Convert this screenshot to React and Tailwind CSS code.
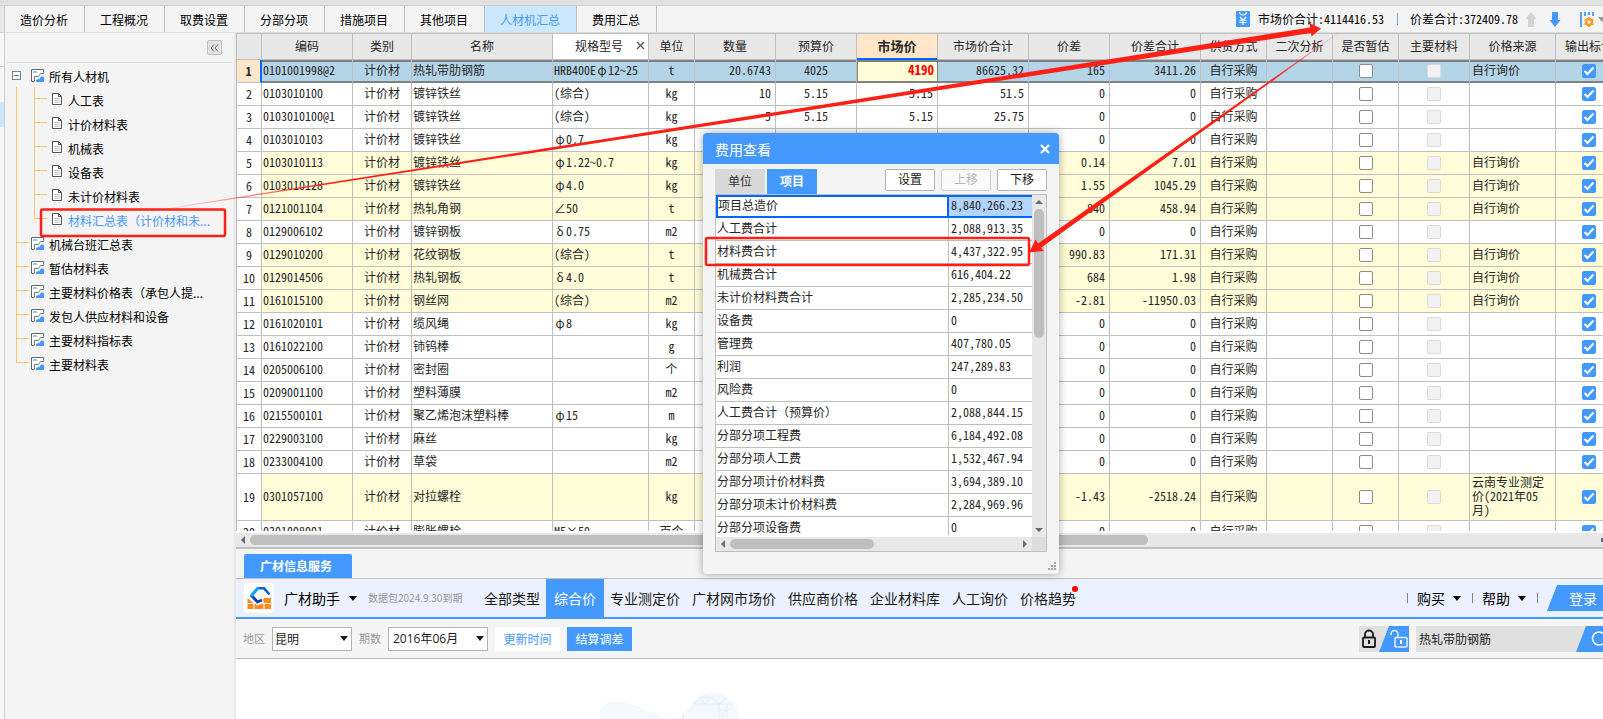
import React, { useState } from 'react';
import clsx from 'clsx';

const tabs = ['造价分析', '工程概况', '取费设置', '分部分项', '措施项目', '其他项目', '人材机汇总', '费用汇总'];

const childNodes = ['人工表', '计价材料表', '机械表', '设备表', '未计价材料表', '材料汇总表（计价材和未...'];
const rootNodes = ['机械台班汇总表', '暂估材料表', '主要材料价格表（承包人提...', '发包人供应材料和设备', '主要材料指标表', '主要材料表'];

const columns = [
    { title: '', width: 'w-[25px]' },
    { title: '编码', width: 'w-[91px]' },
    { title: '类别', width: 'w-[59px]' },
    { title: '名称', width: 'w-[141px]' },
    { title: '规格型号', width: 'w-[96px]' },
    { title: '单位', width: 'w-[46px]' },
    { title: '数量', width: 'w-[81px]' },
    { title: '预算价', width: 'w-[81px]' },
    { title: '市场价', width: 'w-[81px]' },
    { title: '市场价合计', width: 'w-[91px]' },
    { title: '价差', width: 'w-[81px]' },
    { title: '价差合计', width: 'w-[91px]' },
    { title: '供货方式', width: 'w-[66px]' },
    { title: '二次分析', width: 'w-[66px]' },
    { title: '是否暂估', width: 'w-[66px]' },
    { title: '主要材料', width: 'w-[71px]' },
    { title: '价格来源', width: 'w-[86px]' },
    { title: '输出标记', width: 'w-[67px]' },
];

// code, name, spec, unit, qty, budget, market, market total, diff, diff total, source
const materials = [
    ['0101001998@2', '热轧带肋钢筋', 'HRB400Eφ12~25', 't', '20.6743', '4025', '4190', '86625.32', '165', '3411.26', '自行询价'],
    ['0103010100', '镀锌铁丝', '(综合)', 'kg', '10', '5.15', '5.15', '51.5', '0', '0', ''],
    ['0103010100@1', '镀锌铁丝', '(综合)', 'kg', '5', '5.15', '5.15', '25.75', '0', '0', ''],
    ['0103010103', '镀锌铁丝', 'φ0.7', 'kg', '', '', '', '', '0', '0', ''],
    ['0103010113', '镀锌铁丝', 'φ1.22~0.7', 'kg', '', '', '', '', '0.14', '7.01', '自行询价'],
    ['0103010128', '镀锌铁丝', 'φ4.0', 'kg', '', '', '', '', '1.55', '1045.29', '自行询价'],
    ['0121001104', '热轧角钢', '∠50', 't', '', '', '', '', '840', '458.94', '自行询价'],
    ['0129006102', '镀锌钢板', 'δ0.75', 'm2', '', '', '', '', '0', '0', ''],
    ['0129010200', '花纹钢板', '(综合)', 't', '', '', '', '', '990.83', '171.31', '自行询价'],
    ['0129014506', '热轧钢板', 'δ4.0', 't', '', '', '', '', '684', '1.98', '自行询价'],
    ['0161015100', '钢丝网', '(综合)', 'm2', '', '', '', '', '-2.81', '-11950.03', '自行询价'],
    ['0161020101', '缆风绳', 'φ8', 'kg', '', '', '', '', '0', '0', ''],
    ['0161022100', '铈钨棒', '', 'g', '', '', '', '', '0', '0', ''],
    ['0205006100', '密封圈', '', '个', '', '', '', '', '0', '0', ''],
    ['0209001100', '塑料薄膜', '', 'm2', '', '', '', '', '0', '0', ''],
    ['0215500101', '聚乙烯泡沫塑料棒', 'φ15', 'm', '', '', '', '', '0', '0', ''],
    ['0229003100', '麻丝', '', 'kg', '', '', '', '', '0', '0', ''],
    ['0233004100', '草袋', '', 'm2', '', '', '', '', '0', '0', ''],
    ['0301057100', '对拉螺栓', '', 'kg', '', '', '', '', '-1.43', '-2518.24', '云南专业测定价(2021年05月)'],
    ['0301098001', '膨胀螺栓', 'M5×50', '百个', '', '', '', '', '0', '0', ''],
];

const fees = [
    ['项目总造价', '8,840,266.23'],
    ['人工费合计', '2,088,913.35'],
    ['材料费合计', '4,437,322.95'],
    ['机械费合计', '616,404.22'],
    ['未计价材料费合计', '2,285,234.50'],
    ['设备费', '0'],
    ['管理费', '407,780.05'],
    ['利润', '247,289.83'],
    ['风险费', '0'],
    ['人工费合计（预算价）', '2,088,844.15'],
    ['分部分项工程费', '6,184,492.08'],
    ['分部分项人工费', '1,532,467.94'],
    ['分部分项计价材料费', '3,694,389.10'],
    ['分部分项未计价材料费', '2,284,969.96'],
    ['分部分项设备费', '0'],
];

const priceTabs = ['全部类型', '综合价', '专业测定价', '广材网市场价', '供应商价格', '企业材料库', '人工询价', '价格趋势'];

const Caret = ({ className }) => (
    <svg viewBox="0 0 8 5" className={clsx('h-[5px] w-2 shrink-0', className)}><path d="M0 0h8L4 5z" fill="currentColor" /></svg>
);

const SheetIcon = () => (
    <svg viewBox="0 0 13 13" className="h-[13px] w-[13px] shrink-0">
        <path d="M12.500 3.500V.5H.5v12h3" fill="#fff" stroke="#666" />
        <rect x="2" y="2" width="4" height="2" fill="#9cc9f5" />
        <path d="M3.500 12V7.500h4l2-3h3.500" fill="none" stroke="#777" />
        <path d="M5 13v-2l4-1.500L10 7.500h3V13z" fill="#4499ff" />
    </svg>
);

const FileIcon = () => (
    <svg viewBox="0 0 10 12" className="h-3 w-[10px] shrink-0">
        <path d="M.5.5h6l3 3v8h-9z" fill="#fff" stroke="#555" />
        <path d="M6.500.5v3h3" fill="none" stroke="#555" />
        <path d="M2 5.500h6M2 7.500h6M2 9.500h6" stroke="#bbb" strokeWidth="0.8" />
    </svg>
);

const Branch = ({ last }) => (
    <span className="flex w-[13px] shrink-0 flex-col self-stretch">
        <span className="h-3 border-b border-l border-[#ffc36b]"></span>
        <span className={clsx('h-3 border-[#ffc36b]', !last && 'border-l')}></span>
    </span>
);

// Greek symbols take a full character cell in the spec column
const Spec = ({ text }) => text.split(/([φδ])/).map((part, i) => (
    /[φδ]/.test(part) ? <span key={i} className="inline-block w-3 text-center">{part}</span> : part
));

const Check = ({ label, checked, disabled }) => {
    const [on, setOn] = useState(!!checked);
    return (
        <span className="grid place-items-center">
            <input type="checkbox" aria-label={label} checked={on} disabled={disabled} onChange={() => setOn(!on)}
                className="col-start-1 row-start-1 h-[14px] w-[14px] appearance-none rounded-[2px] border border-[#8c8c8c] bg-white checked:border-[#4499ff] checked:bg-[#4499ff] disabled:border-[#d9d9d9] disabled:bg-[#f2f2f2]" />
            {on && (
                <svg viewBox="0 0 14 14" className="pointer-events-none col-start-1 row-start-1 h-[14px] w-[14px]">
                    <path d="M2.500 7l3 3 6-6.500" fill="none" stroke="#fff" strokeWidth="2" />
                </svg>
            )}
        </span>
    );
};

const Sidebar = () => (
    <aside className="w-[231px] shrink-0 border-r-2 border-[#e8e8e8] text-black">
        <div className="mx-0.5 flex h-[30px] items-center justify-end border-b border-[#dcdcdc] pr-[10px]">
            <button aria-label="收起" className="flex h-[15px] w-[15px] items-center justify-center rounded-[2px] border border-[#bfbfbf] bg-[#e4e4e4]">
                <svg viewBox="0 0 9 8" className="h-2 w-[9px]"><path d="M4 .5L1 4l3 3.500M8 .5L5 4l3 3.500" fill="none" stroke="#666" /></svg>
            </button>
        </div>
        <ul className="text-xs">
            <li className="flex h-6 items-center pl-[7px]">
                <svg viewBox="0 0 9 9" className="mr-[10px] h-[9px] w-[9px]">
                    <rect x=".5" y=".5" width="8" height="8" fill="#fff" stroke="#808080" /><path d="M2 4.500h5" stroke="#1a8fff" />
                </svg>
                <SheetIcon />
                <span className="pt-[3px] pl-[5px]">所有人材机</span>
            </li>
            {childNodes.map((name, i) => (
                <li key={name} className="flex h-6 items-center pl-[11px]">
                    <span className="w-[18px] self-stretch border-l border-[#ffc36b]"></span>
                    <Branch last={i === childNodes.length - 1} />
                    <span className="pr-[6px] pl-[5px]"><FileIcon /></span>
                    <a href="#" className={clsx('pt-[3px] whitespace-nowrap', i === 5 && 'text-[#4499ff]')}>{name}</a>
                </li>
            ))}
            {rootNodes.map((name, i) => (
                <li key={name} className="flex h-6 items-center pl-[11px]">
                    <Branch last={i === rootNodes.length - 1} />
                    <span className="pr-[5px] pl-0.5"><SheetIcon /></span>
                    <a href="#" className="pt-[3px] whitespace-nowrap">{name}</a>
                </li>
            ))}
        </ul>
    </aside>
);

const MaterialTable = () => (
    <table className="w-[1386px] table-fixed border-separate border-spacing-0 font-['Noto_Sans_Mono_CJK_SC','Liberation_Mono',monospace] text-xs leading-[14px] text-[#262626]">
        <thead>
            <tr className="h-[26px] bg-[#e8e8e8]">
                {columns.map(({ title, width }, i) => (
                    <th key={i} className={clsx(width, 'h-[26px] border-r border-b p-0 pb-0.5',
                        title === '规格型号' && 'bg-white',
                        title === '市场价'
                            ? 'border-r-[#bfbfbf] border-b-[#0066ff] bg-[#ffe6c8] text-[13px] font-bold shadow-[inset_0_-1px_0_#0066ff]'
                            : 'border-[#bfbfbf] font-normal')}>
                        {title === '规格型号' ? (
                            <span className="flex items-center justify-end gap-[13px] pr-[3px]">
                                {title}
                                <svg viewBox="0 0 9 9" className="h-[9px] w-[9px]"><path d="M1 1l7 7M8 1L1 8" stroke="#555" strokeWidth="1.3" /></svg>
                            </span>
                        ) : title}
                    </th>
                ))}
            </tr>
        </thead>
        <tbody>
            {materials.map(([code, name, spec, unit, qty, budget, market, total, diff, diffTotal, source], i) => {
                const first = i === 0;
                const tall = source.length > 4;
                const base = clsx('border-r border-b',
                    first ? 'border-r-[#bfbfbf] border-b-[#808080] bg-[#b4d4e7] shadow-[inset_0_2px_0_#808080,inset_0_-1px_0_#808080]' : 'border-[#bfbfbf]',
                    !first && source && 'bg-[#fffcd7]');
                const left = clsx(base, 'p-0 pb-0.5 pl-px whitespace-nowrap');
                const center = clsx(base, 'p-0 pb-0.5 text-center');
                const right = clsx(base, 'p-0 pr-1 pb-0.5 text-right');
                const box = clsx(base, 'p-0');
                return (
                    <tr key={code} className={tall ? 'h-[47px]' : 'h-[23px]'}>
                        <td className={clsx('border-b border-b-[#bfbfbf] p-0 text-center', first ? 'border-r-2 border-r-[#0066ff] bg-[#ffe6c8] font-bold' : 'border-r border-r-[#bfbfbf]')}>{i + 1}</td>
                        <td className={left}>{code}</td>
                        <td className={center}>计价材</td>
                        <td className={left}>{name}</td>
                        <td className={left}><Spec text={spec} /></td>
                        <td className={center}>{unit}</td>
                        <td className={right}>{qty}</td>
                        <td className={center}>{budget}</td>
                        {first
                            ? <td className="border-r border-b border-[#808080] bg-[#fffcd7] p-0 pr-[3px] pb-0.5 text-right text-[13px] font-bold text-[#f00] shadow-[inset_0_2px_0_#808080,inset_1px_-1px_0_#808080]">{market}</td>
                            : <td className={right}>{market}</td>}
                        <td className={right}>{total}</td>
                        <td className={right}>{diff}</td>
                        <td className={right}>{diffTotal}</td>
                        <td className={center}>自行采购</td>
                        <td className={box}></td>
                        <td className={box}><Check label="是否暂估" /></td>
                        <td className={box}><Check label="主要材料" disabled /></td>
                        <td className={clsx(base, 'p-0 pr-2 pb-0.5 pl-0.5')}>{source}</td>
                        <td className={box}><Check label="输出标记" checked /></td>
                    </tr>
                );
            })}
        </tbody>
    </table>
);

const PriceService = () => (
    <section className="shrink-0">
        <div className="flex h-[30px] items-end border-b border-[#bfbfbf] bg-[#f4f4f4] pl-2">
            <button className="h-6 w-[108px] rounded-t-[2px] bg-[#4499ff] pr-1 text-xs font-bold text-white">广材信息服务</button>
        </div>
        <div className="flex h-10 items-center border-b-2 border-[#4499ff] bg-[#ebf1ff] text-sm whitespace-nowrap text-[#1a1a1a]">
            <svg viewBox="0 0 30 30" className="ml-2 h-[30px] w-[30px]">
                <rect width="30" height="30" rx="3" fill="#fff" />
                <path d="M3.500 15v5h6zM27 15v5H17l3-5zM3.500 21h6v5h-6zM10.500 21h9v5h-9zM20.500 21H27v5h-6.500z" fill="#ff8a1f" />
                <path d="M7 12l6.500 7.500L19 17" fill="none" stroke="#fff" strokeWidth="5" />
                <path d="M13 5.200h7L25.500 11.500" fill="none" stroke="#0b5fd0" strokeWidth="2.600" />
                <path d="M7 12l6.500 7 4.500-2" fill="none" stroke="#0b45b4" strokeWidth="3" />
                <path d="M14.500 4.500L7 13" fill="none" stroke="#0aa5f5" strokeWidth="3.200" />
            </svg>
            <button className="ml-[10px] flex items-center gap-[9px] text-black">广材助手 <Caret /></button>
            <span className="ml-[11px] w-[110px] text-[10px] text-[#999]">数据包2024.9.30到期</span>
            <nav className="flex h-full items-center">
                {priceTabs.map((name) => (
                    <a key={name} href="#" className={clsx('relative flex h-full items-center',
                        name === '综合价' ? 'bg-[#4499ff] px-2 text-white' : 'px-[6px]')}>
                        {name}
                        {name === '价格趋势' && <i className="absolute top-[7px] right-1 h-[6px] w-[6px] rounded-full bg-[#f00]"></i>}
                    </a>
                ))}
            </nav>
            <div className="ml-auto flex items-center text-black">
                <span className="h-[10px] w-px bg-[#888]"></span>
                <button className="flex items-center gap-2 pr-[11px] pl-[9px]">购买 <Caret /></button>
                <span className="h-[10px] w-px bg-[#888]"></span>
                <button className="flex items-center gap-2 pr-[11px] pl-[9px]">帮助 <Caret /></button>
                <span className="h-[10px] w-px bg-[#888]"></span>
                <button className="ml-[9px] h-[26px] w-[56px] bg-[#4499ff] pl-[22px] text-left text-white [clip-path:polygon(10px_0,100%_0,100%_100%,0_100%)]">登录</button>
            </div>
        </div>
        <div className="flex h-10 items-center border-b border-[#bfbfbf] bg-[#f5f5f5] pl-[7px] text-xs text-[#1a1a1a]">
            <label htmlFor="area" className="w-[29px] text-[11px] text-[#999]">地区</label>
            <span className="grid items-center">
                <select id="area" className="col-start-1 row-start-1 h-6 w-20 appearance-none border border-[#b3b3b3] bg-white pl-[2px]"><option>昆明</option></select>
                <Caret className="pointer-events-none col-start-1 row-start-1 mr-1 justify-self-end" />
            </span>
            <label htmlFor="period" className="ml-[7px] w-[29px] text-[11px] text-[#999]">期数</label>
            <span className="grid items-center">
                <select id="period" className="col-start-1 row-start-1 h-6 w-[100px] appearance-none border border-[#b3b3b3] bg-white pl-1 font-['Open_Sans','Noto_Sans_CJK_SC',sans-serif]"><option>2016年06月</option></select>
                <Caret className="pointer-events-none col-start-1 row-start-1 mr-1 justify-self-end" />
            </span>
            <button className="ml-[7px] h-6 w-[65px] bg-white text-[#4499ff]">更新时间</button>
            <button className="ml-[7px] h-6 w-[65px] bg-[#4499ff] text-white">结算调差</button>
            <button aria-label="锁定" className="ml-auto h-[26px] w-[50px] bg-[#e0e0e0]">
                <svg viewBox="0 0 50 26" className="h-[26px] w-[50px]">
                    <path d="M30 0h20v26H20z" fill="#4499ff" />
                    <rect x="4" y="11.500" width="12" height="9.500" rx="1" fill="none" stroke="#1a1a1a" strokeWidth="1.800" />
                    <path d="M6 11V8.500a4 4 0 018 0V11" fill="none" stroke="#1a1a1a" strokeWidth="1.800" />
                    <path d="M10 14v4" stroke="#1a1a1a" strokeWidth="2" />
                    <rect x="36" y="11.500" width="12" height="9.500" rx="1" fill="none" stroke="#e6f1ff" strokeWidth="1.500" />
                    <path d="M32 9V8a3.500 3.500 0 017 0v3" fill="none" stroke="#e6f1ff" strokeWidth="1.500" />
                    <path d="M42 14v4" stroke="#fff" strokeWidth="2" />
                </svg>
            </button>
            <div className="ml-[7px] flex h-[26px] w-[187px] bg-[#e0e0e0]">
                <input aria-label="搜索" defaultValue="热轧带肋钢筋" className="w-40 bg-transparent pl-[3px] outline-none" />
                <button aria-label="查询" className="flex w-[27px] items-center">
                    <svg viewBox="0 0 27 26" className="h-[26px] w-[27px]">
                        <path d="M10 0h17v26H0z" fill="#4499ff" />
                        <circle cx="23" cy="12.500" r="6.500" fill="none" stroke="#fff" strokeWidth="1.500" />
                    </svg>
                </button>
            </div>
        </div>
        <div className="h-[60px] bg-white pl-[364px]">
            <svg viewBox="0 0 140 60" className="h-[60px] w-[140px]">
                <path d="M0 60C-2 47 5 43 15 43c18 0 32 8 51 17zM76 60c8-4 12-9 16-15 8-10 16-12 20-12 14 0 24 10 28 27z" fill="#f5f9fe" />
                <path d="M94 45h38M94 45l7-7h10l8 7V60M119 45l7-6M127 45V60M119 51h8M119 58l8-7M101 38l4 7 6-7M83 54v6" fill="none" stroke="#e3eefa" />
            </svg>
        </div>
    </section>
);

const FeeDialog = () => (
    <div role="dialog" aria-label="费用查看" className="absolute top-[133px] left-[703px] z-10 w-[356px] rounded-[4px] bg-[#f4f4f4] pb-[22px] shadow-[0_0_8px_rgba(0,0,0,0.35)]">
        <div className="flex h-[31px] items-center justify-between rounded-t-[4px] bg-[#4499ff] pr-[9px] pl-3 text-sm text-white">
            <span>费用查看</span>
            <button aria-label="关闭">
                <svg viewBox="0 0 10 10" className="h-[10px] w-[10px]"><path d="M1 1l8 8M9 1L1 9" stroke="#fff" strokeWidth="2.200" /></svg>
            </button>
        </div>
        <div className="flex px-3 pt-[5px] text-xs">
            <button className="h-[25px] w-[50px] bg-[#d9d9d9] pb-px text-[#333]">单位</button>
            <button className="ml-0.5 h-[25px] w-[50px] bg-[#4499ff] pb-px font-bold text-white">项目</button>
            <div className="ml-auto flex gap-[6px]">
                <button className="h-[22px] w-[50px] rounded-[2px] border border-[#b3b3b3] bg-white pb-0.5 text-[#1a1a1a]">设置</button>
                <button disabled className="h-[22px] w-[50px] rounded-[2px] border border-[#d0d0d0] bg-[#fafafa] pb-0.5 text-[#b8b8b8]">上移</button>
                <button className="h-[22px] w-[50px] rounded-[2px] border border-[#b3b3b3] bg-white pb-0.5 text-[#1a1a1a]">下移</button>
            </div>
        </div>
        <div className="mx-3 border border-[#bfbfbf]">
            <div className="flex h-[342px] bg-white">
                <div className="h-[340px] flex-1 overflow-hidden">
                    <table className="w-full table-fixed border-separate border-spacing-0 font-['Noto_Sans_Mono_CJK_SC','Liberation_Mono',monospace] text-xs leading-[14px] text-[#262626]">
                        <tbody>
                            {fees.map(([name, amount], i) => (
                                <tr key={name} className="h-[23px]">
                                    <td className={clsx('p-0', i === 0 ? 'border-2 border-[#0066ff] pb-[3px]' : 'border-r border-b border-[#bfbfbf] pb-0.5 pl-px')}>{name}</td>
                                    <td className={clsx('w-[83px] p-0 pl-0.5', i === 0 ? 'border-y-2 border-[#0066ff] bg-[#b3d4ff] pb-[3px]' : 'border-b border-[#bfbfbf] pb-0.5')}>{amount}</td>
                                </tr>
                            ))}
                        </tbody>
                    </table>
                </div>
                <div className="flex w-[14px] flex-col items-center justify-between bg-[#e8e8e8] py-[5px]">
                    <svg viewBox="0 0 8 4" className="h-1 w-2"><path d="M0 4h8L4 0z" fill="#666b73" /></svg>
                    <span className="mt-[5px] mb-auto h-[129px] w-[10px] rounded-full bg-[#bfbfbf]"></span>
                    <svg viewBox="0 0 8 4" className="h-1 w-2"><path d="M0 0h8L4 4z" fill="#666b73" /></svg>
                </div>
            </div>
            <div className="flex h-[14px] items-center bg-[#e8e8e8]">
                <svg viewBox="0 0 4 8" className="ml-[5px] h-2 w-1"><path d="M4 0v8L0 4z" fill="#666b73" /></svg>
                <span className="ml-[5px] h-[10px] w-36 rounded-full bg-[#bfbfbf]"></span>
                <svg viewBox="0 0 4 8" className="mr-[5px] ml-auto h-2 w-1"><path d="M0 0v8l4-4z" fill="#666b73" /></svg>
                <span className="h-[14px] w-[14px] bg-[#dedede]"></span>
            </div>
        </div>
        <svg viewBox="0 0 8 8" className="absolute right-[3px] bottom-1 h-2 w-2">
            <path d="M6 0h2v2H6zM3 3h2v2H3zM6 3h2v2H6zM0 6h2v2H0zM3 6h2v2H3zM6 6h2v2H6z" fill="#a6a6a6" />
        </svg>
    </div>
);

// Red marks drawn over the whole window
const Annotations = () => (
    <svg viewBox="0 0 1603 719" className="pointer-events-none absolute top-0 left-0 z-20 h-[719px] w-[1603px]">
        <defs>
            <linearGradient id="fadeA" gradientUnits="userSpaceOnUse" x1="170" y1="208" x2="330" y2="183">
                <stop offset="0" stopColor="#ff2015" stopOpacity="0.1" />
                <stop offset="1" stopColor="#ff2015" />
            </linearGradient>
            <linearGradient id="fadeB" gradientUnits="userSpaceOnUse" x1="1338" y1="33" x2="1270" y2="82">
                <stop offset="0" stopColor="#ff2015" stopOpacity="0.1" />
                <stop offset="1" stopColor="#ff2015" />
            </linearGradient>
        </defs>
        <path d="M170 207.800L1310 27.500 1309.500 23 1321 28.500 1311.500 36.500 1311 33 170 208.700z" fill="url(#fadeA)" />
        <path d="M1338 32.800L1038 243.500 1035.500 239.500 1029 252.500 1044 251 1041 247.800 1338 33.600z" fill="url(#fadeB)" />
        <rect x="41" y="209.500" width="184" height="26.500" rx="1.500" fill="none" stroke="#ff2015" strokeWidth="2.500" />
        <rect x="706" y="238" width="323" height="27" rx="1.500" fill="none" stroke="#ff2015" strokeWidth="2.500" />
    </svg>
);

export default function App() {
    const [activeTab, setActiveTab] = useState('人材机汇总');

    return (
        <div className="relative flex h-screen flex-col overflow-hidden bg-[#f4f4f4] font-['Noto_Sans_CJK_SC',sans-serif]">
            <div className="h-[6px] shrink-0 border-b border-[#cfcfcf] bg-[#e1e1e1]"></div>
            <div className="flex min-h-0 flex-1">
                <div className="w-[5px] shrink-0 border-r border-[#cccccc] bg-[#f7f7f7]">
                    <div className="h-[27px] border-b border-[#d4d4d4] bg-[#e8e8e8]"></div>
                    <div className="h-[34px] border-b border-[#d4d4d4]"></div>
                    <div className="mt-[35px] h-[25px] bg-[#cce8ff]"></div>
                </div>
                <div className="flex min-w-0 flex-1 flex-col">
                    <div className="flex h-[27px] shrink-0 border-b border-[#dcdcdc] text-xs text-black">
                        {tabs.map((name) => (
                            <button key={name} onClick={() => setActiveTab(name)}
                                className={clsx('border-r border-[#bfbfbf] pt-0.5 pr-px', name === '人材机汇总' ? 'w-[92px]' : 'w-20', name === activeTab && 'bg-[#cce8ff] text-[#4499ff]')}>
                                {name}
                            </button>
                        ))}
                        <div className="ml-auto flex items-center font-['Noto_Sans_Mono_CJK_SC','Liberation_Mono',monospace] whitespace-nowrap">
                            <svg viewBox="0 0 14 16" className="mr-2 h-4 w-[14px]">
                                <rect width="14" height="16" rx="1" fill="#4499ff" />
                                <path d="M3.500 1a3.500 3 0 007 0" fill="none" stroke="#fff" strokeWidth="1.200" />
                                <path d="M4 6l3 3.500L10 6M3.500 9.500h7M3.500 11.500h7M7 9.500V14" fill="none" stroke="#fff" strokeWidth="1.200" />
                            </svg>
                            <span className="w-[127px]">市场价合计:4114416.53</span>
                            <span className="mx-3 h-3 w-px bg-[#7da7d9]"></span>
                            <span className="w-[115px]">价差合计:372409.78</span>
                            <svg viewBox="0 0 12 15" className="h-[15px] w-3"><path d="M6 0l5.500 7H9v8H3V7H.5z" fill="#d3d3d3" /></svg>
                            <svg viewBox="0 0 12 15" className="ml-3 h-[15px] w-3"><path d="M6 15l5.500-7H9V0H3v8H.5z" fill="#4499ff" /></svg>
                            <svg viewBox="0 0 14 15" className="ml-[19px] h-[15px] w-[14px]">
                                <path d="M1 0v15M5 0v4M9 0v3M13 0v4" stroke="#4499ff" strokeWidth="1.800" />
                                <circle cx="9" cy="10" r="3" fill="none" stroke="#ff9a1f" strokeWidth="2.400" />
                                <path d="M9 5v2M9 13v2M4.500 7.500l2 1M13.500 7.500l-2 1M4.500 12.500l2-1M13.500 12.500l-2-1" stroke="#ff9a1f" strokeWidth="1.800" />
                            </svg>
                            <Caret className="-mr-[3px] ml-1 text-[#999]" />
                        </div>
                    </div>
                    <div className="flex min-h-0 flex-1">
                        <Sidebar />
                        <main className="flex min-w-0 flex-1 flex-col bg-white">
                            <div className="min-h-0 flex-1 overflow-hidden border-t border-l border-[#bfbfbf]">
                                <MaterialTable />
                            </div>
                            <div className="mt-0.5 flex h-4 shrink-0 items-center border-b-2 border-[#bfbfbf] bg-[#e8e8e8] pl-[5px]">
                                <svg viewBox="0 0 4 8" className="h-2 w-1"><path d="M4 0v8L0 4z" fill="#666b73" /></svg>
                                <span className="ml-[5px] h-[10px] w-[898px] rounded-full bg-[#bfbfbf]"></span>
                                <svg viewBox="0 0 4 8" className="ml-auto h-2 w-[2px]"><path d="M0 0h4v8H0z" fill="#666b73" /></svg>
                            </div>
                            <PriceService />
                        </main>
                    </div>
                </div>
            </div>
            <FeeDialog />
            <Annotations />
        </div>
    );
}
